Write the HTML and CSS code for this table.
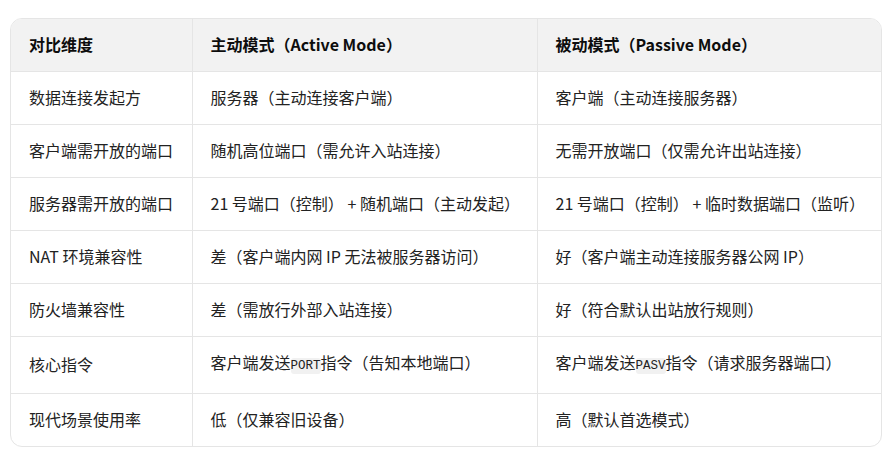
FILE: index.html
```html
<!DOCTYPE html>
<html lang="zh-CN">
<head>
<meta charset="utf-8">
<link rel="stylesheet" href="styles.css">
</head>
<body>
<div class="wrap">
<table class="cmp">
<colgroup><col class="c1"><col class="c2"><col class="c3"></colgroup>
<thead>
<tr><th>对比维度</th><th>主动模式（Active Mode）</th><th>被动模式（Passive Mode）</th></tr>
</thead>
<tbody>
<tr><td>数据连接发起方</td><td>服务器（主动连接客户端）</td><td>客户端（主动连接服务器）</td></tr>
<tr><td>客户端需开放的端口</td><td>随机高位端口（需允许入站连接）</td><td>无需开放端口（仅需允许出站连接）</td></tr>
<tr><td>服务器需开放的端口</td><td>21 号端口（控制） + 随机端口（主动发起）</td><td>21 号端口（控制） + 临时数据端口（监听）</td></tr>
<tr><td>NAT 环境兼容性</td><td>差（客户端内网 IP 无法被服务器访问）</td><td>好（客户端主动连接服务器公网 IP）</td></tr>
<tr><td>防火墙兼容性</td><td>差（需放行外部入站连接）</td><td>好（符合默认出站放行规则）</td></tr>
<tr><td>核心指令</td><td>客户端发送<code>PORT</code>指令（告知本地端口）</td><td>客户端发送<code>PASV</code>指令（请求服务器端口）</td></tr>
<tr><td>现代场景使用率</td><td>低（仅兼容旧设备）</td><td>高（默认首选模式）</td></tr>
</tbody>
</table>
</div>
</body>
</html>
```
FILE: styles.css
```css
html, body {
  margin: 0;
  padding: 0;
  background: #ffffff;
}
body {
  font-family: "Noto Sans CJK SC", "Noto Sans", sans-serif;
  font-size: 16px;
  color: #1f1f1f;
}
.wrap {
  margin: 18px 14px 0 10px;
  width: 870px;
  border: 1px solid #e5e5e5;
  border-radius: 12px;
  overflow: hidden;
}
.cmp {
  width: 100%;
  border-collapse: collapse;
  table-layout: fixed;
}
.c1 { width: 181px; }
.c2 { width: 345px; }
.c3 { width: auto; }
.cmp th, .cmp td {
  text-align: left;
  padding: 15px 18px 17px;
  line-height: 20px;
  height: 20px;
  border-bottom: 1px solid #e5e5e5;
  border-right: 1px solid #e5e5e5;
  white-space: nowrap;
}
.cmp th:last-child, .cmp td:last-child { border-right: none; }
.cmp tbody tr:last-child td { border-bottom: none; }
.cmp th {
  background: #f2f2f2;
  font-weight: 700;
  color: #0d0d0d;
}
.cmp td {
  color: #222222;
}
code {
  font-family: "Liberation Mono", monospace;
  font-size: 12.5px;
  background: #f1f1f1;
  border-radius: 3px;
  padding: 1px 0;
}
```
